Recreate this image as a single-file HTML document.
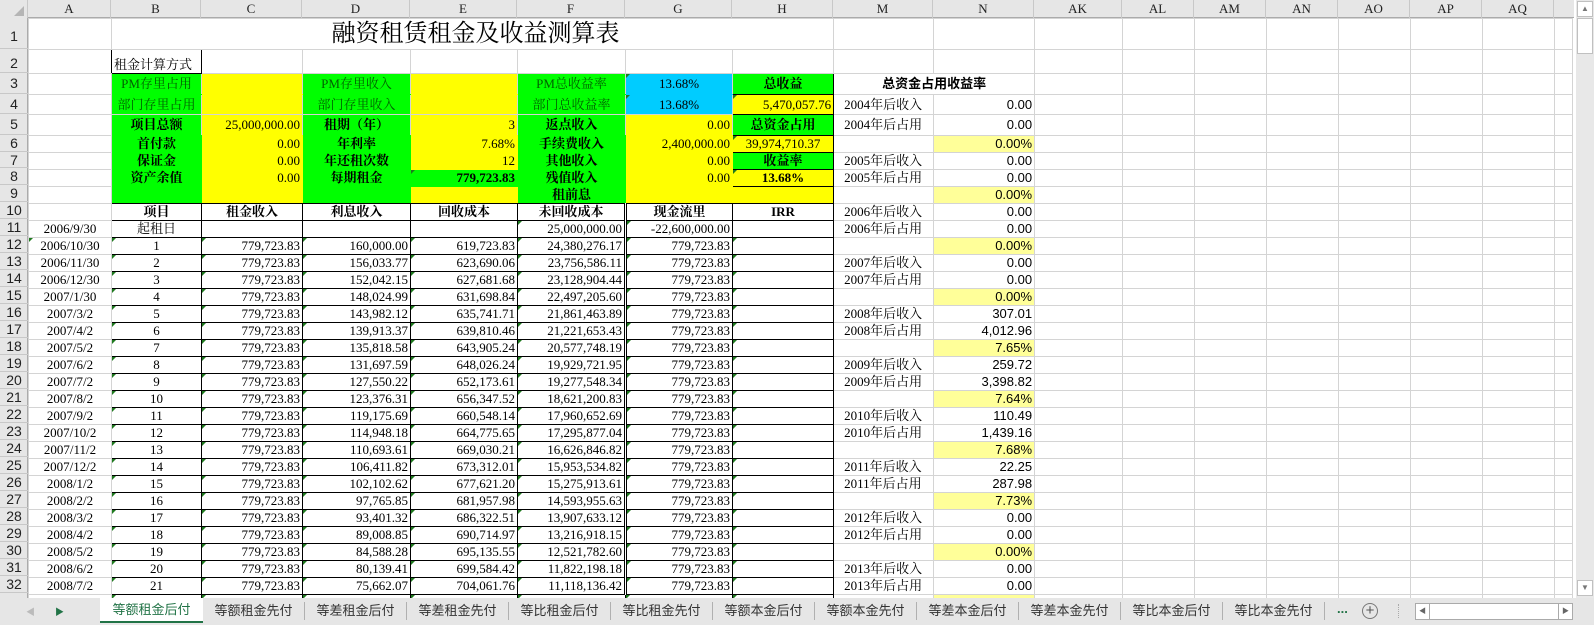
<!DOCTYPE html>
<html><head><meta charset="utf-8">
<style>
*{margin:0;padding:0;box-sizing:border-box}
body{width:1594px;height:625px;overflow:hidden;background:#fff;position:relative;font-family:"Liberation Serif","Noto Serif CJK SC",serif;font-size:13px;color:#000}
#hdr{position:absolute;left:0;top:0;width:1574px;height:18px;background:#e6e6e6;border-bottom:1px solid #ababab}
#hdr div{position:absolute;top:0;height:18px;line-height:18px;text-align:center;border-right:1px solid #c8c8c8;font-size:13px;color:#222}
#rh{position:absolute;left:0;top:18px;width:28px;height:580px;background:#e6e6e6;border-right:1px solid #ababab}
#rh div{position:absolute;left:0;width:28px;text-align:center;border-bottom:1px solid #c8c8c8;font-family:"Liberation Sans",sans-serif;font-size:14px;color:#222}
table{position:absolute;left:28px;top:18px;border-collapse:collapse;table-layout:fixed;width:1545px}
td{border:1px solid #d4d4d4;height:17px;padding:0 2px;white-space:nowrap;overflow:hidden;font-size:13px;line-height:14px;position:relative}
.r{text-align:right}.c{text-align:center}.b{font-weight:bold}
.g{background:#00ff00}.y{background:#ffff00}.cy{background:#00ccff}.ly{background:#ffff99}
.gt{color:#006100}
.k{border:1px solid #000}
.kt{border-top:1px solid #000}
.t::before{content:"";position:absolute;left:0;top:0;border-top:4px solid #1f7a1f;border-right:4px solid transparent}
.n{font-family:"Liberation Sans",sans-serif;font-size:13px}
.m{padding-left:10px}
#tabs{position:absolute;left:0;top:598px;width:1594px;height:27px;background:#e6e6e6;font-family:"Liberation Sans","Noto Sans CJK SC",sans-serif;font-size:13px;color:#333}
.tab{position:absolute;text-align:center;width:102px;border-right:1px solid #b0b0b0;top:4px;height:18px;line-height:18px}
#vs{position:absolute;left:1576px;top:0;width:18px;height:598px;background:#e8e8e8}
</style></head><body>
<div id="hdr">
<div style="left:0;width:28px;background:#e6e6e6"><span style="position:absolute;right:3px;bottom:2px;border-left:10px solid transparent;border-bottom:10px solid #b5b5b5"></span></div>
<div style="left:28px;width:83px">A</div><div style="left:111px;width:90px">B</div><div style="left:201px;width:101px">C</div><div style="left:302px;width:108px">D</div><div style="left:410px;width:107px">E</div><div style="left:517px;width:108px">F</div><div style="left:625px;width:107px">G</div><div style="left:732px;width:101px">H</div><div style="left:833px;width:100px">M</div><div style="left:933px;width:101px">N</div><div style="left:1034px;width:88px">AK</div><div style="left:1122px;width:72px">AL</div><div style="left:1194px;width:72px">AM</div><div style="left:1266px;width:72px">AN</div><div style="left:1338px;width:72px">AO</div><div style="left:1410px;width:72px">AP</div><div style="left:1482px;width:72px">AQ</div>
</div>
<div id="rh">
<div style="top:0;height:31px;line-height:36px">1</div><div style="top:31px;height:24px;line-height:28px">2</div><div style="top:55px;height:21px;line-height:21px">3</div><div style="top:76px;height:20px;line-height:20px">4</div><div style="top:96px;height:21px;line-height:21px">5</div><div style="top:117px;height:17px;line-height:17px">6</div><div style="top:134px;height:16px;line-height:16px">7</div><div style="top:150px;height:17px;line-height:17px">8</div><div style="top:167px;height:17px;line-height:17px">9</div><div style="top:184px;height:17px;line-height:17px">10</div><div style="top:201px;height:17px;line-height:17px">11</div>
<div style="top:218px;height:17px;line-height:17px">12</div><div style="top:235px;height:17px;line-height:17px">13</div><div style="top:252px;height:17px;line-height:17px">14</div><div style="top:269px;height:17px;line-height:17px">15</div><div style="top:286px;height:17px;line-height:17px">16</div><div style="top:303px;height:17px;line-height:17px">17</div><div style="top:320px;height:17px;line-height:17px">18</div><div style="top:337px;height:17px;line-height:17px">19</div><div style="top:354px;height:17px;line-height:17px">20</div><div style="top:371px;height:17px;line-height:17px">21</div><div style="top:388px;height:17px;line-height:17px">22</div><div style="top:405px;height:17px;line-height:17px">23</div><div style="top:422px;height:17px;line-height:17px">24</div><div style="top:439px;height:17px;line-height:17px">25</div><div style="top:456px;height:17px;line-height:17px">26</div><div style="top:473px;height:17px;line-height:17px">27</div><div style="top:490px;height:17px;line-height:17px">28</div><div style="top:507px;height:17px;line-height:17px">29</div><div style="top:524px;height:17px;line-height:17px">30</div><div style="top:541px;height:17px;line-height:17px">31</div><div style="top:558px;height:17px;line-height:17px">32</div>
</div>
<table>
<colgroup><col style="width:83px"><col style="width:90px"><col style="width:101px"><col style="width:108px"><col style="width:107px"><col style="width:108px"><col style="width:107px"><col style="width:101px"><col style="width:100px"><col style="width:101px"><col style="width:88px"><col style="width:72px"><col style="width:72px"><col style="width:72px"><col style="width:72px"><col style="width:72px"><col style="width:72px"><col style="width:18px"></colgroup>
<tr style="height:31px"><td style="height:31px"></td><td colspan="7" class="c" style="height:31px;font-size:24px;line-height:28px;overflow:visible;padding-left:8px">融资租赁租金及收益测算表</td><td></td><td></td><td></td><td></td><td></td><td></td><td></td><td></td><td></td><td></td></tr>
<tr style="height:24px"><td style="height:24px;border-right:1px solid #000"></td><td style="height:24px;padding-top:6px;border:1px solid #000">租金计算方式</td><td style="border-left:1px solid #000"></td><td></td><td></td><td></td><td></td><td></td><td></td><td></td><td></td><td></td><td></td><td></td><td></td><td></td><td></td><td></td></tr>
<tr><td style="height:21px"></td><td class="g gt c kt" style="border-left:1px solid #000;border-bottom-color:#00ff00">PM存里占用</td><td class="y kt" style="border-bottom-color:#ffff00"></td><td class="g gt c kt" style="border-bottom-color:#00ff00">PM存里收入</td><td class="y kt" style="border-bottom-color:#ffff00"></td><td class="g gt c kt" style="border-bottom-color:#00ff00">PM总收益率</td><td class="cy c t kt" style="border-left:1px solid #000;border-bottom-color:#00ccff">13.68%</td><td class="g c b k">总收益</td><td colspan="2" class="c b" style="font-family:'Liberation Sans','Noto Sans CJK SC',sans-serif">总资金占用收益率</td><td></td><td></td><td></td><td></td><td></td><td></td><td></td><td></td></tr>
<tr><td style="height:20px"></td><td class="g gt c" style="border-left:1px solid #000">部门存里占用</td><td class="y"></td><td class="g gt c">部门存里收入</td><td class="y"></td><td class="g gt c">部门总收益率</td><td class="cy c t" style="border-left:1px solid #000">13.68%</td><td class="y r t k">5,470,057.76</td><td class="m">2004年后收入</td><td class="r n">0.00</td><td></td><td></td><td></td><td></td><td></td><td></td><td></td><td></td></tr>
<tr><td style="height:21px"></td><td class="g c b kt" style="border-left:1px solid #000;border-bottom-color:#00ff00">项目总额</td><td class="y r kt" style="border-bottom-color:#ffff00">25,000,000.00</td><td class="g c b kt" style="border-bottom-color:#00ff00">租期（年）</td><td class="y r kt" style="border-bottom-color:#ffff00">3</td><td class="g c b kt" style="border-bottom-color:#00ff00">返点收入</td><td class="y r kt" style="border-left:1px solid #000;border-bottom-color:#ffff00">0.00</td><td class="g c b k">总资金占用</td><td class="m">2004年后占用</td><td class="r n">0.00</td><td></td><td></td><td></td><td></td><td></td><td></td><td></td><td></td></tr>
<tr><td></td><td class="g c b" style="border-left:1px solid #000;border-color:#00ff00 #00ff00 #00ff00 #000">首付款</td><td class="y r" style="border-color:#ffff00">0.00</td><td class="g c b" style="border-color:#00ff00">年利率</td><td class="y r" style="border-color:#ffff00">7.68%</td><td class="g c b" style="border-color:#00ff00">手续费收入</td><td class="y r" style="border-color:#ffff00 #ffff00 #ffff00 #000">2,400,000.00</td><td class="y c t k">39,974,710.37</td><td></td><td class="r n ly">0.00%</td><td></td><td></td><td></td><td></td><td></td><td></td><td></td><td></td></tr>
<tr><td style="height:16px"></td><td class="g c b" style="border-color:#00ff00 #00ff00 #00ff00 #000">保证金</td><td class="y r" style="border-color:#ffff00">0.00</td><td class="g c b" style="border-color:#00ff00">年还租次数</td><td class="y r" style="border-color:#ffff00">12</td><td class="g c b" style="border-color:#00ff00">其他收入</td><td class="y r" style="border-color:#ffff00 #ffff00 #ffff00 #000">0.00</td><td class="g c b k">收益率</td><td class="m">2005年后收入</td><td class="r n">0.00</td><td></td><td></td><td></td><td></td><td></td><td></td><td></td><td></td></tr>
<tr><td></td><td class="g c b" style="border-color:#00ff00 #00ff00 #00ff00 #000">资产余值</td><td class="y r" style="border-color:#ffff00">0.00</td><td class="g c b" style="border-color:#00ff00">每期租金</td><td class="g r b t" style="border-color:#00ff00">779,723.83</td><td class="g c b" style="border-color:#00ff00">残值收入</td><td class="y r" style="border-color:#ffff00 #ffff00 #ffff00 #000">0.00</td><td class="y c b t k">13.68%</td><td class="m">2005年后占用</td><td class="r n">0.00</td><td></td><td></td><td></td><td></td><td></td><td></td><td></td><td></td></tr>
<tr><td></td><td class="g" style="border-color:#00ff00 #00ff00 #000 #000"></td><td class="y" style="border-color:#ffff00 #ffff00 #000"></td><td class="g" style="border-color:#00ff00 #00ff00 #000"></td><td class="y" style="border-color:#ffff00 #ffff00 #000"></td><td class="g c b" style="border-color:#00ff00 #00ff00 #000">租前息</td><td class="y" style="border-color:#ffff00 #ffff00 #000 #000"></td><td class="y k"></td><td></td><td class="r n ly">0.00%</td><td></td><td></td><td></td><td></td><td></td><td></td><td></td><td></td></tr>
<tr><td></td><td class="c b k">项目</td><td class="c b k">租金收入</td><td class="c b k">利息收入</td><td class="c b k">回收成本</td><td class="c b k">未回收成本</td><td class="c b k" style="border-left:3px double #000">现金流里</td><td class="c b k">IRR</td><td class="m">2006年后收入</td><td class="r n">0.00</td><td></td><td></td><td></td><td></td><td></td><td></td><td></td><td></td></tr>
<tr><td class="c">2006/9/30</td><td class="c k">起租日</td><td class="k"></td><td class="k"></td><td class="k"></td><td class="r k t">25,000,000.00</td><td class="r k t" style="border-left:3px double #000">-22,600,000.00</td><td class="k"></td><td class="m">2006年后占用</td><td class="r n">0.00</td><td></td><td></td><td></td><td></td><td></td><td></td><td></td><td></td></tr>
<tr><td class="c t">2006/10/30</td><td class="c k t">1</td><td class="r k t">779,723.83</td><td class="r k t">160,000.00</td><td class="r k t">619,723.83</td><td class="r k t">24,380,276.17</td><td class="r k t" style="border-left:3px double #000">779,723.83</td><td class="k t"></td><td></td><td class="r n ly">0.00%</td><td></td><td></td><td></td><td></td><td></td><td></td><td></td><td></td></tr>
<tr><td class="c">2006/11/30</td><td class="c k t">2</td><td class="r k t">779,723.83</td><td class="r k t">156,033.77</td><td class="r k t">623,690.06</td><td class="r k t">23,756,586.11</td><td class="r k t" style="border-left:3px double #000">779,723.83</td><td class="k t"></td><td class="m">2007年后收入</td><td class="r n">0.00</td><td></td><td></td><td></td><td></td><td></td><td></td><td></td><td></td></tr>
<tr><td class="c">2006/12/30</td><td class="c k t">3</td><td class="r k t">779,723.83</td><td class="r k t">152,042.15</td><td class="r k t">627,681.68</td><td class="r k t">23,128,904.44</td><td class="r k t" style="border-left:3px double #000">779,723.83</td><td class="k t"></td><td class="m">2007年后占用</td><td class="r n">0.00</td><td></td><td></td><td></td><td></td><td></td><td></td><td></td><td></td></tr>
<tr><td class="c">2007/1/30</td><td class="c k t">4</td><td class="r k t">779,723.83</td><td class="r k t">148,024.99</td><td class="r k t">631,698.84</td><td class="r k t">22,497,205.60</td><td class="r k t" style="border-left:3px double #000">779,723.83</td><td class="k t"></td><td></td><td class="r n ly">0.00%</td><td></td><td></td><td></td><td></td><td></td><td></td><td></td><td></td></tr>
<tr><td class="c">2007/3/2</td><td class="c k t">5</td><td class="r k t">779,723.83</td><td class="r k t">143,982.12</td><td class="r k t">635,741.71</td><td class="r k t">21,861,463.89</td><td class="r k t" style="border-left:3px double #000">779,723.83</td><td class="k t"></td><td class="m">2008年后收入</td><td class="r n">307.01</td><td></td><td></td><td></td><td></td><td></td><td></td><td></td><td></td></tr>
<tr><td class="c">2007/4/2</td><td class="c k t">6</td><td class="r k t">779,723.83</td><td class="r k t">139,913.37</td><td class="r k t">639,810.46</td><td class="r k t">21,221,653.43</td><td class="r k t" style="border-left:3px double #000">779,723.83</td><td class="k t"></td><td class="m">2008年后占用</td><td class="r n">4,012.96</td><td></td><td></td><td></td><td></td><td></td><td></td><td></td><td></td></tr>
<tr><td class="c">2007/5/2</td><td class="c k t">7</td><td class="r k t">779,723.83</td><td class="r k t">135,818.58</td><td class="r k t">643,905.24</td><td class="r k t">20,577,748.19</td><td class="r k t" style="border-left:3px double #000">779,723.83</td><td class="k t"></td><td></td><td class="r n ly">7.65%</td><td></td><td></td><td></td><td></td><td></td><td></td><td></td><td></td></tr>
<tr><td class="c">2007/6/2</td><td class="c k t">8</td><td class="r k t">779,723.83</td><td class="r k t">131,697.59</td><td class="r k t">648,026.24</td><td class="r k t">19,929,721.95</td><td class="r k t" style="border-left:3px double #000">779,723.83</td><td class="k t"></td><td class="m">2009年后收入</td><td class="r n">259.72</td><td></td><td></td><td></td><td></td><td></td><td></td><td></td><td></td></tr>
<tr><td class="c">2007/7/2</td><td class="c k t">9</td><td class="r k t">779,723.83</td><td class="r k t">127,550.22</td><td class="r k t">652,173.61</td><td class="r k t">19,277,548.34</td><td class="r k t" style="border-left:3px double #000">779,723.83</td><td class="k t"></td><td class="m">2009年后占用</td><td class="r n">3,398.82</td><td></td><td></td><td></td><td></td><td></td><td></td><td></td><td></td></tr>
<tr><td class="c">2007/8/2</td><td class="c k t">10</td><td class="r k t">779,723.83</td><td class="r k t">123,376.31</td><td class="r k t">656,347.52</td><td class="r k t">18,621,200.83</td><td class="r k t" style="border-left:3px double #000">779,723.83</td><td class="k t"></td><td></td><td class="r n ly">7.64%</td><td></td><td></td><td></td><td></td><td></td><td></td><td></td><td></td></tr>
<tr><td class="c">2007/9/2</td><td class="c k t">11</td><td class="r k t">779,723.83</td><td class="r k t">119,175.69</td><td class="r k t">660,548.14</td><td class="r k t">17,960,652.69</td><td class="r k t" style="border-left:3px double #000">779,723.83</td><td class="k t"></td><td class="m">2010年后收入</td><td class="r n">110.49</td><td></td><td></td><td></td><td></td><td></td><td></td><td></td><td></td></tr>
<tr><td class="c">2007/10/2</td><td class="c k t">12</td><td class="r k t">779,723.83</td><td class="r k t">114,948.18</td><td class="r k t">664,775.65</td><td class="r k t">17,295,877.04</td><td class="r k t" style="border-left:3px double #000">779,723.83</td><td class="k t"></td><td class="m">2010年后占用</td><td class="r n">1,439.16</td><td></td><td></td><td></td><td></td><td></td><td></td><td></td><td></td></tr>
<tr><td class="c">2007/11/2</td><td class="c k t">13</td><td class="r k t">779,723.83</td><td class="r k t">110,693.61</td><td class="r k t">669,030.21</td><td class="r k t">16,626,846.82</td><td class="r k t" style="border-left:3px double #000">779,723.83</td><td class="k t"></td><td></td><td class="r n ly">7.68%</td><td></td><td></td><td></td><td></td><td></td><td></td><td></td><td></td></tr>
<tr><td class="c">2007/12/2</td><td class="c k t">14</td><td class="r k t">779,723.83</td><td class="r k t">106,411.82</td><td class="r k t">673,312.01</td><td class="r k t">15,953,534.82</td><td class="r k t" style="border-left:3px double #000">779,723.83</td><td class="k t"></td><td class="m">2011年后收入</td><td class="r n">22.25</td><td></td><td></td><td></td><td></td><td></td><td></td><td></td><td></td></tr>
<tr><td class="c">2008/1/2</td><td class="c k t">15</td><td class="r k t">779,723.83</td><td class="r k t">102,102.62</td><td class="r k t">677,621.20</td><td class="r k t">15,275,913.61</td><td class="r k t" style="border-left:3px double #000">779,723.83</td><td class="k t"></td><td class="m">2011年后占用</td><td class="r n">287.98</td><td></td><td></td><td></td><td></td><td></td><td></td><td></td><td></td></tr>
<tr><td class="c">2008/2/2</td><td class="c k t">16</td><td class="r k t">779,723.83</td><td class="r k t">97,765.85</td><td class="r k t">681,957.98</td><td class="r k t">14,593,955.63</td><td class="r k t" style="border-left:3px double #000">779,723.83</td><td class="k t"></td><td></td><td class="r n ly">7.73%</td><td></td><td></td><td></td><td></td><td></td><td></td><td></td><td></td></tr>
<tr><td class="c">2008/3/2</td><td class="c k t">17</td><td class="r k t">779,723.83</td><td class="r k t">93,401.32</td><td class="r k t">686,322.51</td><td class="r k t">13,907,633.12</td><td class="r k t" style="border-left:3px double #000">779,723.83</td><td class="k t"></td><td class="m">2012年后收入</td><td class="r n">0.00</td><td></td><td></td><td></td><td></td><td></td><td></td><td></td><td></td></tr>
<tr><td class="c">2008/4/2</td><td class="c k t">18</td><td class="r k t">779,723.83</td><td class="r k t">89,008.85</td><td class="r k t">690,714.97</td><td class="r k t">13,216,918.15</td><td class="r k t" style="border-left:3px double #000">779,723.83</td><td class="k t"></td><td class="m">2012年后占用</td><td class="r n">0.00</td><td></td><td></td><td></td><td></td><td></td><td></td><td></td><td></td></tr>
<tr><td class="c">2008/5/2</td><td class="c k t">19</td><td class="r k t">779,723.83</td><td class="r k t">84,588.28</td><td class="r k t">695,135.55</td><td class="r k t">12,521,782.60</td><td class="r k t" style="border-left:3px double #000">779,723.83</td><td class="k t"></td><td></td><td class="r n ly">0.00%</td><td></td><td></td><td></td><td></td><td></td><td></td><td></td><td></td></tr>
<tr><td class="c">2008/6/2</td><td class="c k t">20</td><td class="r k t">779,723.83</td><td class="r k t">80,139.41</td><td class="r k t">699,584.42</td><td class="r k t">11,822,198.18</td><td class="r k t" style="border-left:3px double #000">779,723.83</td><td class="k t"></td><td class="m">2013年后收入</td><td class="r n">0.00</td><td></td><td></td><td></td><td></td><td></td><td></td><td></td><td></td></tr>
<tr><td class="c">2008/7/2</td><td class="c k t">21</td><td class="r k t">779,723.83</td><td class="r k t">75,662.07</td><td class="r k t">704,061.76</td><td class="r k t">11,118,136.42</td><td class="r k t" style="border-left:3px double #000">779,723.83</td><td class="k t"></td><td class="m">2013年后占用</td><td class="r n">0.00</td><td></td><td></td><td></td><td></td><td></td><td></td><td></td><td></td></tr>
<tr><td style="height:8px"></td><td class="k t" style="height:8px"></td><td class="k t"></td><td class="k t"></td><td class="k t"></td><td class="k t"></td><td class="k t"></td><td class="k t"></td><td></td><td class="ly"></td><td></td><td></td><td></td><td></td><td></td><td></td><td></td><td></td></tr>
</table>
<div id="vs">
<div style="position:absolute;left:1px;top:1px;width:16px;height:16px;background:#fff;border:1px solid #c0c0c0;font-size:8px;text-align:center;line-height:14px;color:#777">▲</div>
<div style="position:absolute;left:1px;top:18px;width:16px;height:36px;background:#fff;border:1px solid #c0c0c0"></div>
<div style="position:absolute;left:1px;top:580px;width:16px;height:16px;background:#fff;border:1px solid #c0c0c0;font-size:8px;text-align:center;line-height:14px;color:#777">▼</div>
</div>
<div id="tabs">
<div style="position:absolute;left:26px;top:7px;font-size:9px;color:#bbb">◀</div>
<div style="position:absolute;left:55px;top:7px;font-size:9px;color:#217346">▶</div>
<div class="tab" style="left:100px;top:0;height:25px;line-height:24px;background:#fff;color:#217346;border-bottom:2px solid #217346;border-right:none;width:103px">等额租金后付</div>
<div class="tab" style="left:203px">等额租金先付</div>
<div class="tab" style="left:305px">等差租金后付</div>
<div class="tab" style="left:407px">等差租金先付</div>
<div class="tab" style="left:509px">等比租金后付</div>
<div class="tab" style="left:611px">等比租金先付</div>
<div class="tab" style="left:713px">等额本金后付</div>
<div class="tab" style="left:815px">等额本金先付</div>
<div class="tab" style="left:917px">等差本金后付</div>
<div class="tab" style="left:1019px">等差本金先付</div>
<div class="tab" style="left:1121px">等比本金后付</div>
<div class="tab" style="left:1223px">等比本金先付</div>
<div style="position:absolute;left:1337px;top:3px;color:#217346;font-weight:bold">...</div>
<div style="position:absolute;left:1362px;top:5px;width:16px;height:16px;border:1.5px solid #777;border-radius:50%;text-align:center;line-height:13px;font-size:15px;color:#555">+</div>
<div style="position:absolute;left:1398px;top:6px;width:1px;height:14px;border-left:1px dotted #aaa"></div>
<div style="position:absolute;left:1415px;top:5px;width:158px;height:17px;background:#fff;border:1px solid #aaa">
<div style="position:absolute;left:0;top:0;width:14px;height:15px;border-right:1px solid #aaa;font-size:7px;line-height:15px;text-align:center;color:#666">◀</div>
<div style="position:absolute;right:0;top:0;width:14px;height:15px;border-left:1px solid #aaa;font-size:7px;line-height:15px;text-align:center;color:#666">▶</div>
</div>
</div>
</body></html>
